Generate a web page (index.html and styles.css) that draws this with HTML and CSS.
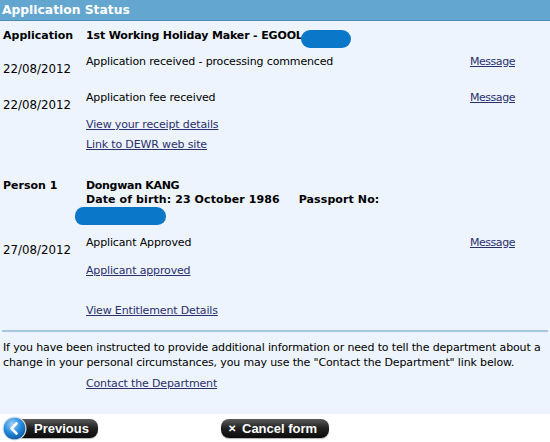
FILE: index.html
```html
<!DOCTYPE html>
<html lang="en">
<head>
    <meta charset="UTF-8">
    <title>Application Status</title>
    <link rel="stylesheet" href="styles.css">
</head>
<body>
    <div class="panel">
        <h1 class="title">Application Status</h1>

        <div class="line app">
            <div class="label">Application</div>
            <div class="value">1st Working Holiday Maker - EGOOL<span class="blot blot-ref"></span></div>
        </div>

        <div class="line entry e1">
            <div class="date">22/08/2012</div>
            <div class="desc">Application received - processing commenced</div>
            <a class="msg" href="#">Message</a>
        </div>

        <div class="line entry e2">
            <div class="date">22/08/2012</div>
            <div class="desc">
                Application fee received
                <a class="link l-receipt" href="#">View your receipt details</a>
                <a class="link l-dewr" href="#">Link to DEWR web site</a>
            </div>
            <a class="msg" href="#">Message</a>
        </div>

        <div class="line person">
            <div class="label">Person 1</div>
            <div class="value">
                <span class="name">Dongwan KANG</span><br>
                <span class="dob">Date of birth: 23 October 1986<span class="gap"></span>Passport No:</span>
                <span class="blot blot-pass"></span>
            </div>
        </div>

        <div class="line entry e3">
            <div class="date">27/08/2012</div>
            <div class="desc">
                Applicant Approved
                <a class="link l-approved" href="#">Applicant approved</a>
                <a class="link l-entitle" href="#">View Entitlement Details</a>
            </div>
            <a class="msg" href="#">Message</a>
        </div>

        <hr class="rule">

        <p class="note">If you have been instructed to provide additional information or need to tell the department about a<br>change in your personal circumstances, you may use the "Contact the Department" link below.</p>
        <a class="link contact" href="#">Contact the Department</a>
    </div>

    <div class="buttons">
        <a class="btn prev" href="#">
            <svg class="circle" width="25" height="25" viewBox="0 0 25 25">
                <defs>
                    <radialGradient id="g1" cx="40%" cy="30%" r="70%">
                        <stop offset="0" stop-color="#9fd2f7"/>
                        <stop offset="0.55" stop-color="#2c8ee0"/>
                        <stop offset="1" stop-color="#0c5dab"/>
                    </radialGradient>
                </defs>
                <circle cx="12.5" cy="12.5" r="12" fill="#d9dfe6"/>
                <circle cx="12.5" cy="12.5" r="10.8" fill="url(#g1)"/>
                <path d="M14.5 7.5 L9.5 12.5 L14.5 17.5" fill="none" stroke="#fff" stroke-width="2.6" stroke-linecap="round" stroke-linejoin="round"/>
            </svg>
            <span>Previous</span>
        </a>
        <a class="btn cancel" href="#"><span class="x">&#x2715;</span>Cancel form</a>
    </div>
</body>
</html>
```

FILE: styles.css
```css
body {
    margin: 0;
    font-family: "DejaVu Sans", Verdana, sans-serif;
    font-size: 11px;
    color: #000;
    background: #fff;
}
.panel {
    background-color: #edf4fd;
    padding-bottom: 23px;
}
.title {
    margin: 0;
    height: 20px;
    padding-left: 2px;
    font-size: 12.3px;
    line-height: 20px;
    color: #fff;
    background-color: #63a6d0;
    border-bottom: 1px solid #4d8dba;
}
.line {
    display: grid;
    grid-template-columns: 83px 1fr auto;
    padding: 0 35px 0 3px;
    line-height: 14px;
}
.label, .value {
    font-weight: bold;
}
.app { margin-top: 8px; }
.app .value { letter-spacing: -0.15px; }
.e1 { margin-top: 11px; }
.e2 { margin-top: 15px; }
.person { margin-top: 27px; }
.e3 { margin-top: 9px; }
.name { letter-spacing: -0.3px; }
.dob { letter-spacing: 0.1px; }
.date {
    padding-top: 7px;
    font-size: 11.8px;
}
.desc {
    letter-spacing: -0.15px;
}
a {
    color: #2b2f6e;
}
.msg {
    letter-spacing: -0.45px;
}
.link {
    display: block;
    width: max-content;
    letter-spacing: -0.15px;
}
.l-receipt { margin-top: 13px; }
.l-dewr { margin-top: 6px; }
.l-approved { margin-top: 14px; }
.l-entitle { margin-top: 26px; }
.gap {
    display: inline-block;
    width: 19px;
}
.blot {
    display: inline-block;
    background-color: #0a77c9;
}
.blot-ref {
    width: 50px;
    height: 18px;
    margin: -4px 0 -4px -2px;
    border-radius: 9px;
    vertical-align: -5px;
}
.blot-pass {
    display: block;
    width: 91px;
    height: 18px;
    margin: 0 0 2px -11px;
    border-radius: 9px 10px 9px 8px;
}
.rule {
    margin: 12px 2px 0;
    height: 2px;
    border: none;
    background-color: #a6c7e2;
}
.note {
    margin: 8px 0 0 3px;
    line-height: 15px;
    letter-spacing: -0.15px;
}
.contact {
    margin: 7px 0 0 86px;
    line-height: 14px;
}
.buttons {
    display: flex;
    align-items: center;
    height: 29px;
    padding-left: 3px;
}
.btn {
    display: flex;
    align-items: center;
    height: 19px;
    font-family: "Liberation Sans", Arial, sans-serif;
    font-size: 13px;
    font-weight: bold;
    color: #fff;
    text-decoration: none;
    background: linear-gradient(#5a5a5a, #202020 50%, #0c0c0c);
    border-radius: 8px;
    box-shadow: 0 1px 1px rgba(0,0,0,0.3);
}
.prev {
    position: relative;
    width: 90px;
    margin-left: 5px;
    padding-left: 26px;
    box-sizing: border-box;
}
.prev .circle {
    position: absolute;
    left: -6px;
    top: -3px;
}
.cancel {
    width: 108px;
    margin-left: 123px;
    padding-left: 7px;
    box-sizing: border-box;
}
.x {
    font-size: 10px;
    margin-right: 6px;
}
```
